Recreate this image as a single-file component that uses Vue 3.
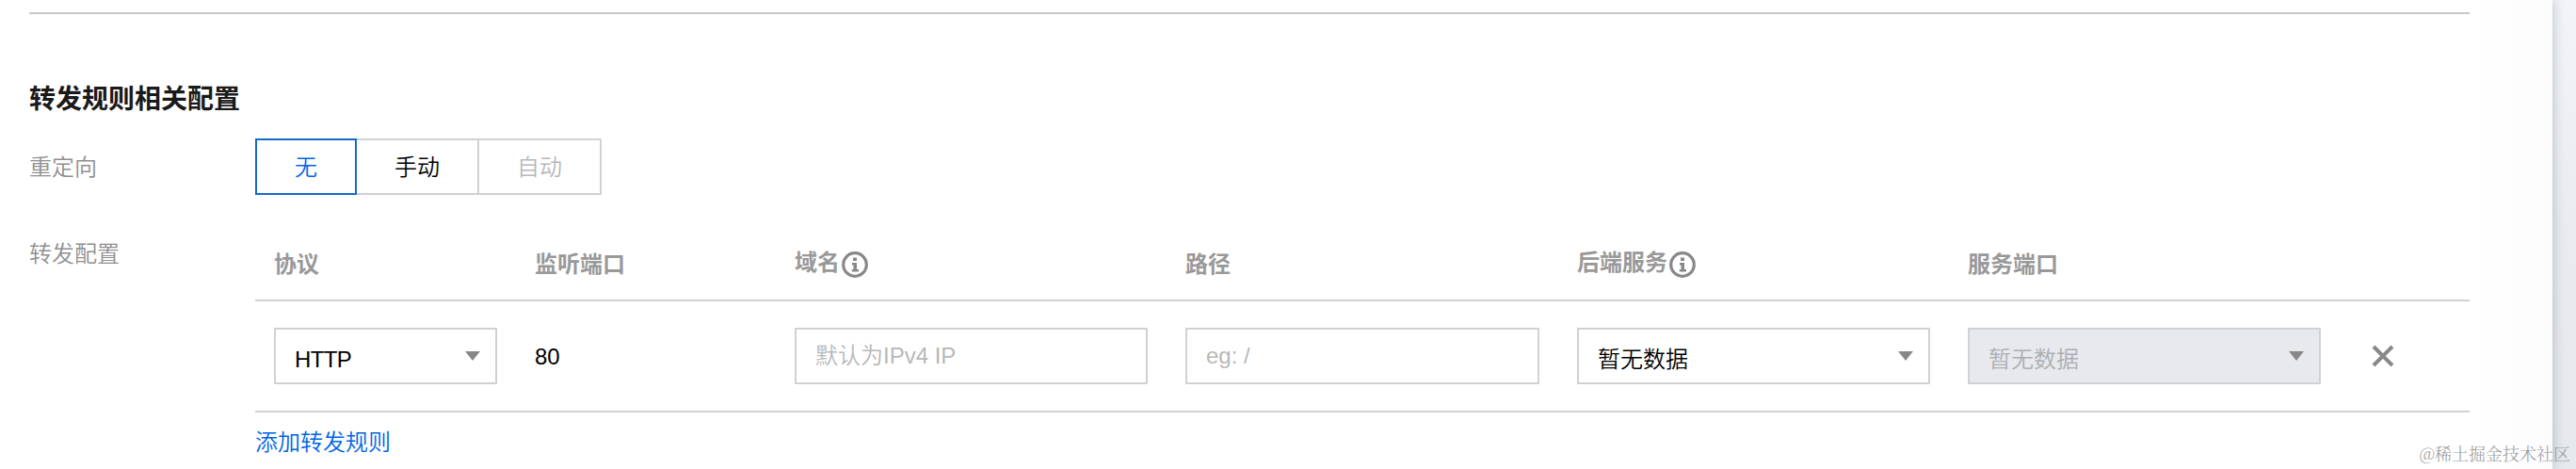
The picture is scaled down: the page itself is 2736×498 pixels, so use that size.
<template>
  <div class="page">
    <div class="panel">
      <div class="divider"></div>
      <h3 class="title">转发规则相关配置</h3>

      <div class="form-item redirect">
        <label class="form-label">重定向</label>
        <div class="segment">
          <button
            v-for="item in modes"
            :key="item.value"
            class="segment-btn"
            :class="{ active: mode === item.value }"
            :disabled="item.disabled"
            @click="mode = item.value"
          >{{ item.text }}</button>
        </div>
      </div>

      <div class="form-item forward">
        <label class="form-label">转发配置</label>
        <div class="form-content">
          <div class="row header">
            <div v-for="col in columns" :key="col.text" class="cell" :class="{ tip: col.tip }">
              <span>{{ col.text }}</span>
              <svg v-if="col.tip" class="info" viewBox="0 0 28 28">
                <circle cx="14" cy="14" r="12.3" fill="none" stroke="#888" stroke-width="3.2" />
                <path d="M12 6.5h4v3.5h-4zM11 12h5v7h2v2.5h-7.200v-2.500h1.700v-4.500h-1.500z" fill="#888" />
              </svg>
            </div>
            <div class="cell"></div>
          </div>

          <div v-for="(rule, index) in rules" :key="index" class="row body">
            <div class="cell">
              <div class="select">
                <span class="protocol">{{ rule.protocol }}</span>
                <i class="arrow"></i>
              </div>
            </div>
            <div class="cell port">{{ rule.port }}</div>
            <div class="cell">
              <input v-model="rule.domain" class="input" placeholder="默认为IPv4 IP">
            </div>
            <div class="cell">
              <input v-model="rule.path" class="input" placeholder="eg: /">
            </div>
            <div class="cell">
              <div class="select">
                <span>暂无数据</span>
                <i class="arrow"></i>
              </div>
            </div>
            <div class="cell">
              <div class="select disabled">
                <span>暂无数据</span>
                <i class="arrow"></i>
              </div>
            </div>
            <div class="cell remove">
              <svg class="close" viewBox="0 0 24 24" @click="removeRule(index)">
                <path d="M2 2L22 22M22 2L2 22" stroke="#888" stroke-width="4" />
              </svg>
            </div>
          </div>

          <a class="add" @click="addRule">添加转发规则</a>
        </div>
      </div>
    </div>
    <span class="watermark">@稀土掘金技术社区</span>
  </div>
</template>

<script setup>
import { ref } from 'vue'

const mode = ref('none')
const modes = [
  { value: 'none', text: '无' },
  { value: 'manual', text: '手动' },
  { value: 'auto', text: '自动', disabled: true }
]

const columns = [
  { text: '协议' },
  { text: '监听端口' },
  { text: '域名', tip: true },
  { text: '路径' },
  { text: '后端服务', tip: true },
  { text: '服务端口' }
]

const createRule = () => ({ protocol: 'HTTP', port: 80, domain: '', path: '' })
const rules = ref([createRule()])

// 添加规则
const addRule = () => {
  rules.value.push(createRule())
}

// 删除规则
const removeRule = (index) => {
  rules.value.splice(index, 1)
}
</script>

<style>
body {
  margin: 0;
  overflow: hidden;
}
</style>

<style scoped>
.page {
  position: relative;
  box-sizing: border-box;
  height: 498px;
  padding-right: 25px;
  overflow: hidden;
  background: linear-gradient(#f2f4f9, #e9ebf0 50%, #e6e9ee);
  font-family: "Liberation Sans", "Noto Sans CJK SC", sans-serif;
  font-size: 24px;
  font-weight: 350;
  line-height: 36px;
  color: #000;
}

.page * {
  box-sizing: border-box;
}

.panel {
  height: 498px;
  padding: 13px 88px 0 31px;
  background: linear-gradient(90deg, #fff 97%, #fcfcfd);
  box-shadow: 0 0 12px rgba(50, 60, 70, 0.3);
}

.divider {
  height: 2px;
  background: #c8c8c8;
}

.title {
  margin: 71px 0 0;
  color: #1a1a1a;
  font-size: 28px;
  font-weight: bold;
  line-height: 40px;
}

.form-item {
  display: flex;
}

.redirect {
  margin-top: 21px;
}

.form-label {
  width: 240px;
  flex: none;
  color: #909090;
}

.redirect .form-label {
  line-height: 62px;
  height: 60px;
}

.forward {
  margin-top: 31px;
}

.forward .form-label {
  padding-top: 14px;
}

.form-content {
  flex: 1;
}

.segment {
  display: flex;
}

.segment-btn {
  width: 132px;
  height: 60px;
  margin-left: -2px;
  padding: 2px 0 0;
  border: 2px solid #cfd2d6;
  background: #fff;
  color: #000;
  font: inherit;
}

.segment-btn:first-child {
  width: 108px;
  margin-left: 0;
}

.segment-btn.active {
  position: relative;
  border-color: #176bc6;
  color: #0064e6;
}

.segment-btn:disabled {
  color: #b8b8b8;
}

.row {
  display: grid;
  grid-template-columns: 277px 276px 415px 416px 415px 415px 138px;
  border-bottom: 2px solid #cfd2d4;
}

.cell {
  display: flex;
  align-items: center;
  padding: 0 20px;
}

.header {
  height: 82px;
  padding-top: 5px;
  color: #999;
  font-weight: bold;
}

.tip span {
  padding-bottom: 4px;
}

.info {
  width: 28px;
  height: 28px;
  margin-left: 2px;
}

.body {
  height: 118px;
}

.select,
.input {
  width: 100%;
  height: 60px;
  border: 2px solid #cfd2d5;
  padding: 0 20px;
  background: #fff;
}

.select {
  display: flex;
  align-items: center;
  justify-content: space-between;
  padding-right: 16px;
}

.select span {
  padding-top: 7px;
}

.select .protocol {
  letter-spacing: -0.6px;
}

.select.disabled {
  background: #e7e9ed;
  color: #acaeb2;
}

.input {
  font: inherit;
  border-radius: 0;
  outline: none;
}

.input::placeholder {
  color: #b8b8b8;
  opacity: 1;
}

.arrow {
  border: 8px solid transparent;
  border-top: 10px solid #888;
  border-bottom: 0;
}

.port {
  padding-top: 2px;
}

.remove {
  padding-left: 34px;
}

.close {
  width: 24px;
  height: 24px;
  cursor: pointer;
}

.add {
  display: block;
  margin-top: 14px;
  color: #0064e6;
  cursor: pointer;
}

.watermark {
  position: absolute;
  right: 6px;
  bottom: 5px;
  font-family: "Noto Serif CJK SC", "Liberation Serif", "Noto Sans CJK SC", serif;
  font-size: 18px;
  line-height: 24px;
  color: #999;
}
</style>
